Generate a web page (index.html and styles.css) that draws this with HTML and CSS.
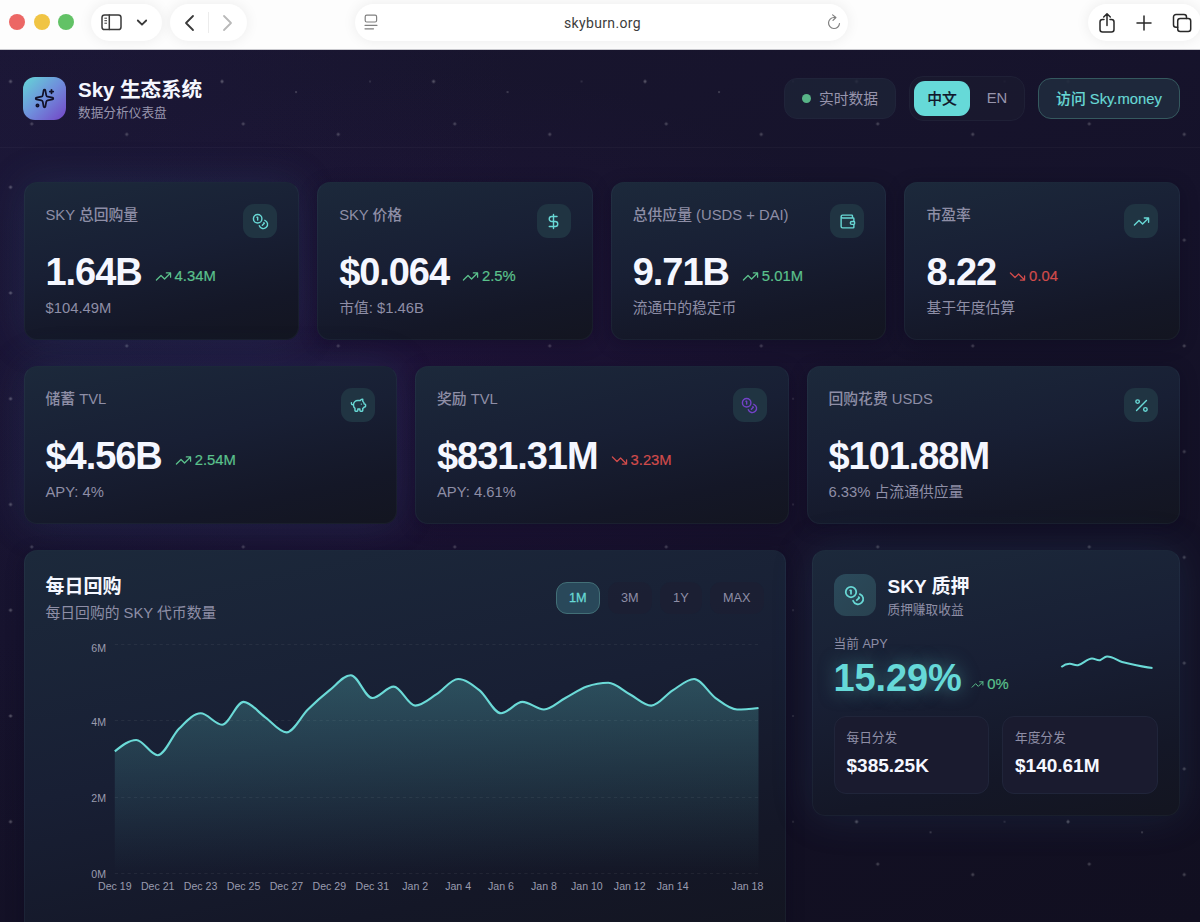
FILE: index.html
```html
<!DOCTYPE html>
<html lang="zh-CN">
<head>
<meta charset="utf-8">
<title>Sky 生态系统</title>
<link rel="stylesheet" href="styles.css">
</head>
<body>
<svg class="sprite" aria-hidden="true">
  <symbol id="coins" viewBox="0 0 24 24"><circle cx="8" cy="8" r="6"/><path d="M18.09 10.37A6 6 0 1 1 10.34 18M7 6h1v4M16.71 13.88l.7.71-2.82 2.82"/></symbol>
  <symbol id="dollar" viewBox="0 0 24 24"><path d="M12 2v20M17 5H9.5a3.5 3.5 0 0 0 0 7h5a3.5 3.5 0 0 1 0 7H6"/></symbol>
  <symbol id="wallet" viewBox="0 0 24 24"><path d="M19 7V4a1 1 0 0 0-1-1H5a2 2 0 0 0 0 4h15a1 1 0 0 1 1 1v4h-3a2 2 0 0 0 0 4h3a1 1 0 0 0 1-1v-2a1 1 0 0 0-1-1M3 5v14a2 2 0 0 0 2 2h15a1 1 0 0 0 1-1v-4"/></symbol>
  <symbol id="up" viewBox="0 0 24 24"><path d="M22 7l-8.500 8.500-5-5L2 17M16 7h6v6"/></symbol>
  <symbol id="down" viewBox="0 0 24 24"><path d="M22 17l-8.500-8.500-5 5L2 7M16 17h6v-6"/></symbol>
  <symbol id="piggy" viewBox="0 0 24 24"><path d="M11 17h3v2a1 1 0 0 0 1 1h2a1 1 0 0 0 1-1v-3a3.160 3.160 0 0 0 2-2h1a1 1 0 0 0 1-1v-2a1 1 0 0 0-1-1h-1a5 5 0 0 0-2-4V3a4 4 0 0 0-3.200 1.600l-.3.4H11a6 6 0 0 0-6 6v1a5 5 0 0 0 2 4v3a1 1 0 0 0 1 1h2a1 1 0 0 0 1-1zM16 10h.01M2 8v1a2 2 0 0 0 2 2h1"/></symbol>
  <symbol id="percent" viewBox="0 0 24 24"><path d="M19 5L5 19"/><circle cx="6.5" cy="6.5" r="2.500"/><circle cx="17.5" cy="17.5" r="2.500"/></symbol>
  <symbol id="sparkles" viewBox="0 0 24 24"><path d="M11.017 2.814a1 1 0 0 1 1.966 0l1.051 5.558a2 2 0 0 0 1.594 1.594l5.558 1.051a1 1 0 0 1 0 1.966l-5.558 1.051a2 2 0 0 0-1.594 1.594l-1.051 5.558a1 1 0 0 1-1.966 0l-1.051-5.558a2 2 0 0 0-1.594-1.594l-5.558-1.051a1 1 0 0 1 0-1.966l5.558-1.051a2 2 0 0 0 1.594-1.594zM20 2v4M22 4h-4"/><circle cx="4" cy="20" r="1.300"/></symbol>
</svg>

<div class="browser">
  <div class="lights"><i class="red"></i><i class="yellow"></i><i class="green"></i></div>
  <div class="pill pill-side">
    <svg width="22" height="17" viewBox="0 0 22 17"><rect x="1" y="1" width="19" height="14.500" rx="2.600"/><path d="M8.300 1v14.500"/><path class="thin" d="M3.800 4.200h1.800M3.800 6.700h1.800M3.800 9.200h1.800"/></svg>
    <svg width="12" height="8" viewBox="0 0 12 8"><path class="bold" d="M1.800 1.500L6 5.700l4.200-4.200"/></svg>
  </div>
  <div class="pill pill-nav">
    <svg width="11" height="18" viewBox="0 0 11 18"><path class="bold" d="M9 2L2 9l7 7"/></svg>
    <span class="nav-line"></span>
    <svg class="off" width="11" height="18" viewBox="0 0 11 18"><path class="bold" d="M2 2l7 7-7 7"/></svg>
  </div>
  <div class="pill pill-url">
    <svg class="grey" width="14" height="17" viewBox="0 0 14 17"><rect x="1.200" y="1.200" width="11.400" height="6.800" rx="1.500"/><path d="M1 11.300h12M1 14.800h8.500"/></svg>
    <span class="url">skyburn.org</span>
    <svg class="grey" width="14" height="17" viewBox="0 0 14 17"><path d="M8.300 3.500H7A5.500 5.500 0 1 0 12.500 9.500M5.600.9l3.300 2.600-2.900 2.900"/></svg>
  </div>
  <div class="pill pill-tools">
    <svg width="18" height="22" viewBox="0 0 18 22"><path d="M6 7.500H4.500A2.500 2.500 0 0 0 2 10v7.500A2.500 2.500 0 0 0 4.500 20h9a2.500 2.500 0 0 0 2.500-2.500V10a2.500 2.500 0 0 0-2.500-2.500H12M9 13.500V2M5.700 5L9 1.800 12.300 5"/></svg>
    <svg width="16" height="16" viewBox="0 0 16 16"><path d="M8 1v14M1 8h14"/></svg>
    <svg width="20" height="20" viewBox="0 0 20 20"><path d="M5.700 14.200H4A2.500 2.500 0 0 1 1.500 11.700V4A2.500 2.500 0 0 1 4 1.500h8A2.500 2.500 0 0 1 14.500 4v1.500"/><rect x="5.700" y="5.500" width="13" height="13" rx="2.500"/></svg>
  </div>
</div>

<div class="page">
  <header class="header">
    <div class="logo"><svg class="icon"><use href="#sparkles"/></svg></div>
    <div class="brand"><h1>Sky 生态系统</h1><p>数据分析仪表盘</p></div>
    <div class="live"><i></i><span>实时数据</span></div>
    <div class="lang"><span class="active">中文</span><span>EN</span></div>
    <a class="visit">访问 Sky.money</a>
  </header>

  <main class="main">
    <section class="row four">
      <article class="card glow">
        <div class="top"><span>SKY 总回购量</span><b class="chip"><svg class="icon"><use href="#coins"/></svg></b></div>
        <div class="figure"><strong>1.64B</strong><em class="trend"><svg class="icon"><use href="#up"/></svg>4.34M</em></div>
        <p>$104.49M</p>
      </article>
      <article class="card">
        <div class="top"><span>SKY 价格</span><b class="chip"><svg class="icon"><use href="#dollar"/></svg></b></div>
        <div class="figure"><strong>$0.064</strong><em class="trend"><svg class="icon"><use href="#up"/></svg>2.5%</em></div>
        <p>市值: $1.46B</p>
      </article>
      <article class="card">
        <div class="top"><span>总供应量 (USDS + DAI)</span><b class="chip"><svg class="icon"><use href="#wallet"/></svg></b></div>
        <div class="figure"><strong>9.71B</strong><em class="trend"><svg class="icon"><use href="#up"/></svg>5.01M</em></div>
        <p>流通中的稳定币</p>
      </article>
      <article class="card">
        <div class="top"><span>市盈率</span><b class="chip"><svg class="icon"><use href="#up"/></svg></b></div>
        <div class="figure"><strong>8.22</strong><em class="trend down"><svg class="icon"><use href="#down"/></svg>0.04</em></div>
        <p>基于年度估算</p>
      </article>
    </section>

    <section class="row three">
      <article class="card glow">
        <div class="top"><span>储蓄 TVL</span><b class="chip"><svg class="icon"><use href="#piggy"/></svg></b></div>
        <div class="figure"><strong>$4.56B</strong><em class="trend"><svg class="icon"><use href="#up"/></svg>2.54M</em></div>
        <p>APY: 4%</p>
      </article>
      <article class="card">
        <div class="top"><span>奖励 TVL</span><b class="chip purple"><svg class="icon"><use href="#coins"/></svg></b></div>
        <div class="figure"><strong>$831.31M</strong><em class="trend down"><svg class="icon"><use href="#down"/></svg>3.23M</em></div>
        <p>APY: 4.61%</p>
      </article>
      <article class="card">
        <div class="top"><span>回购花费 USDS</span><b class="chip"><svg class="icon"><use href="#percent"/></svg></b></div>
        <div class="figure"><strong>$101.88M</strong></div>
        <p>6.33% 占流通供应量</p>
      </article>
    </section>

    <section class="bottom">
      <article class="card chart-card">
        <div class="chart-head">
          <div><h2>每日回购</h2><p>每日回购的 SKY 代币数量</p></div>
          <div class="ranges"><span class="active">1M</span><span>3M</span><span>1Y</span><span>MAX</span></div>
        </div>
        <svg class="chart" id="chart" width="720" height="262" viewBox="45.500 636 720 262">
          <defs><linearGradient id="fade" x1="0" y1="675" x2="0" y2="873" gradientUnits="userSpaceOnUse"><stop offset="0" stop-color="#66d9d4" stop-opacity=".26"/><stop offset="1" stop-color="#66d9d4" stop-opacity="0"/></linearGradient></defs>
        </svg>
      </article>

      <article class="card stake glow">
        <div class="stake-head">
          <b class="stake-icon"><svg class="icon"><use href="#coins"/></svg></b>
          <div><h2>SKY 质押</h2><p>质押赚取收益</p></div>
        </div>
        <div class="apy">
          <div>
            <p>当前 APY</p>
            <div class="apy-figure"><strong>15.29%</strong><em class="trend small"><svg class="icon"><use href="#up"/></svg>0%</em></div>
          </div>
          <svg class="spark" width="96" height="20" viewBox="1059 652 96 20"><path d="M1061.300 667C1064 665 1067 663.600 1070 663.800C1073 664.100 1075 665.700 1078 665.200C1083 664.200 1087 658.500 1092 658.500C1095 658.500 1097 660.800 1100 660.200C1103 659.400 1104 656.600 1107 656.500C1113 656.300 1117 660.800 1122 662C1132 664.300 1142 667 1152.500 668"/></svg>
        </div>
        <div class="payouts">
          <div><p>每日分发</p><strong>$385.25K</strong></div>
          <div><p>年度分发</p><strong>$140.61M</strong></div>
        </div>
      </article>
    </section>
  </main>
</div>
<script src="chart.js"></script>
</body>
</html>
```
FILE: styles.css
```css
* { box-sizing: border-box; }
body, h1, h2, p { margin: 0; }
body {
  width: 1200px; height: 922px; overflow: hidden; color: #f5f7ff; background: #15112a;
  font-family: "Liberation Sans", "Noto Sans CJK SC", sans-serif; font-size: 14.8px;
}
em, i { font-style: normal; }
.sprite { position: absolute; width: 0; height: 0; }
.icon { width: 17px; height: 17px; fill: none; stroke: currentColor; stroke-width: 2; stroke-linecap: round; stroke-linejoin: round; display: block; }

/* browser toolbar */
.browser { height: 50px; background: #fdfdfd; border-bottom: 1px solid #c9c9ce; display: flex; padding-top: 4px; overflow: hidden; }
.browser svg { fill: none; stroke: #3a3a3a; stroke-width: 1.5; stroke-linecap: round; stroke-linejoin: round; flex: none; }
.browser .thin { stroke-width: 1; }
.browser .bold { stroke-width: 1.8; }
.browser .off { stroke: #b9b9b9; }
.browser .grey { stroke: #808080; stroke-width: 1.2; }
.lights { display: flex; gap: 8.500px; padding: 10px 0 0 9px; width: 91px; flex: none; }
.lights i { width: 16px; height: 16px; border-radius: 50%; }
.red { background: #ec6765; } .yellow { background: #f0c444; } .green { background: #62c266; }
.pill { height: 37px; border-radius: 19px; background: #fff; box-shadow: 0 0 14px rgba(0,0,0,.075); display: flex; align-items: center; flex: none; }
.pill-side { width: 71px; padding-left: 10px; gap: 13px; margin-right: 8px; }
.pill-nav { width: 77px; padding-left: 14px; gap: 13px; margin-right: 108px; }
.nav-line { width: 1px; height: 21px; background: #ececec; }
.pill-url { width: 493px; padding: 0 7px 0 9px; justify-content: space-between; margin-right: 240px; }
.url { font: 14px/20px Roboto, sans-serif; letter-spacing: .35px; color: #3c3c3c; }
.pill-tools { width: 113px; padding-left: 10px; gap: 20px; }
.pill-tools svg { stroke: #292929; }

/* page and star field */
.page {
  height: 872px;
  background-image:
    radial-gradient(circle, rgba(255,255,255,.25) 0 1px, transparent 2px),
    radial-gradient(circle, rgba(255,255,255,.19) 0 1px, transparent 2px),
    radial-gradient(circle, rgba(255,255,255,.2) 0 1px, transparent 2px),
    radial-gradient(circle, rgba(255,255,255,.2) 0 .5px, transparent 1.500px),
    radial-gradient(circle, rgba(255,255,255,.13) 0 .5px, transparent 1.500px),
    radial-gradient(ellipse 520px 330px at 430px 350px, rgba(62,18,105,.22), transparent),
    radial-gradient(ellipse 520px 700px at 0 150px, rgba(38,28,84,.25), transparent),
    linear-gradient(160deg, #19162f 0%, #15122a 45%, #110f20 100%);
  background-size: 211.500px 105.750px, 211.500px 105.750px, 211.500px 105.750px, 211.500px 105.750px, 211.500px 105.750px, auto, auto, auto;
  background-position: -95.200px -21.400px, -74px 21px, 21px 31.500px, -21.200px -10.800px, 52.800px -21.400px, 0 0, 0 0, 0 0;
}
.header { height: 98px; padding: 0 20px 1px 23px; display: flex; align-items: center; border-bottom: 1px solid rgba(255,255,255,.03); }
.logo { width: 43px; height: 43px; border-radius: 12px; background: linear-gradient(135deg, #64d7d6 0%, #6f8fdc 50%, #7444c6 100%); color: #12122a; display: grid; place-items: center; }
.logo .icon { width: 21px; height: 21px; }
.brand { margin-left: 12px; flex: 1; padding-top: 2px; }
.brand h1 { font-size: 20.600px; line-height: 27px; letter-spacing: -.1px; }
.brand p { font-size: 12.700px; line-height: 20px; color: #9794ac; }
.live { width: 112px; height: 41px; border: 1px solid #20243a; border-radius: 13px; background: rgba(29,35,55,.8); color: #9794ac; display: flex; align-items: center; justify-content: center; gap: 8px; }
.live span { padding-bottom: 2px; }
.live i { width: 9px; height: 9px; border-radius: 50%; background: #58b487; }
.lang { width: 116px; height: 45px; margin: 0 13px; padding: 4px; border: 1px solid #1f2036; border-radius: 14px; background: rgba(26,26,48,.8); color: #9794ac; display: flex; }
.lang span { width: 54px; line-height: 35px; text-align: center; border-radius: 11px; flex: none; }
.lang .active { width: 56px; background: #66d9d8; color: #11162a; font-weight: 500; -webkit-text-stroke: .15px #11162a; line-height: 36px; height: 35px; }
.visit { width: 142px; height: 41px; border: 1px solid #35595f; border-radius: 13px; background: rgba(31,42,61,.92); color: #68d8d5; line-height: 40px; text-align: center; font-weight: 500; -webkit-text-stroke: .15px #68d8d5; }

/* metric cards */
.main { padding: 34px 20px 0 23.500px; display: flex; flex-direction: column; gap: 26px; }
.row { display: grid; gap: 18px; }
.four { grid-template-columns: repeat(4, 1fr); }
.three { grid-template-columns: repeat(3, 1fr); }
.card {
  height: 158px; padding: 21px; border: 1px solid rgba(110,150,180,.07); border-top-color: rgba(110,150,180,.02); border-radius: 13px;
  background: linear-gradient(168deg, #1c293b 0%, #181f34 45%, #141727 78%, #131520 100%) border-box;
  box-shadow: 0 4px 18px rgba(10,8,26,.3);
}
.glow { box-shadow: 0 0 42px rgba(62,120,165,.17); }
.card p { color: #8e8ea6; }
.top { display: flex; justify-content: space-between; height: 34px; line-height: 22px; color: #8e8ea6; font-weight: 500; }
.chip { width: 34px; height: 34px; border-radius: 11px; background: #203442; color: #68d8d5; display: grid; place-items: center; }
.chip.purple { color: #7342c8; }
.figure { display: flex; height: 38px; margin-top: 14px; gap: 13px; align-items: center; }
.figure strong { font-size: 38px; line-height: 38px; letter-spacing: -1.060px; padding-top: 1px; }
.trend { display: flex; align-items: center; gap: 3px; color: #5bc18c; margin-top: 10px; line-height: 18px; -webkit-text-stroke: .2px; }
.trend.down { color: #d14b4b; }
.trend .icon { stroke-width: 1.8; }
.card > p { margin-top: 8px; line-height: 20px; }

/* chart and staking */
.bottom { display: grid; grid-template-columns: 762px 368px; gap: 26px; align-items: start; }
.chart-card { height: 400px; }
.card h2 { font-size: 19px; line-height: 28px; }
.chart-head { display: flex; justify-content: space-between; height: 64px; }
.chart-head > div:first-child { padding-top: 1px; }
.chart-head p { line-height: 24px; }
.ranges { display: flex; gap: 7.400px; margin: 9.500px -.5px 0 0; font-size: 12.700px; color: #8e8ea6; }
.ranges span { height: 32px; padding: 0 12.500px; line-height: 30px; border: 1px solid transparent; border-radius: 11px; background: rgba(29,30,50,.6); }
.ranges .active { background: #29485a; border-color: #426f77; color: #68d8d5; -webkit-text-stroke: .3px; }
.chart { display: block; font-size: 10.600px; fill: #9a9caf; }
.chart .grid { stroke: #fff; stroke-opacity: .06; stroke-dasharray: 3.200 3.200; }
.chart .line { fill: none; stroke: #6bdad7; stroke-width: 2.100; }
.stake { height: 266px; }
.stake-head { display: flex; gap: 12px; height: 60px; padding-top: 1px; }
.stake-head p { font-size: 12.700px; line-height: 18px; }
.stake-icon { width: 42px; height: 42px; margin-top: 1px; border-radius: 12px; background: linear-gradient(135deg, #2b4a5b, #294250); color: #68d8d5; display: grid; place-items: center; }
.stake-icon .icon { width: 21px; height: 21px; }
.apy { display: flex; justify-content: space-between; height: 84px; font-size: 12.700px; }
.apy p { line-height: 24px; }
.apy-figure { display: flex; align-items: center; gap: 9.500px; height: 42px; font-size: 14.800px; }
.apy-figure strong { font-size: 38px; line-height: 42px; letter-spacing: -.1px; padding-top: 2px; color: #66d9d8; text-shadow: 0 0 18px rgba(102,217,216,.5); }
.trend.small { margin-top: 14px; }
.trend.small .icon { width: 13px; height: 13px; }
.spark { margin: 20px 3px 0 0; fill: none; stroke: #6bdad7; stroke-width: 2; }
.payouts { display: grid; grid-template-columns: 1fr 1fr; gap: 13px; }
.payouts > div { height: 78px; padding: 9px 12px; border: 1px solid #20253a; border-radius: 12px; background: #1a1b2f; }
.payouts p { font-size: 12.700px; line-height: 24px; }
.payouts strong { display: block; font-size: 19px; line-height: 30px; margin-top: 1px; }
```
FILE: chart.js
```js
const values = [3.2, 3.5, 3.1, 3.8, 4.2, 3.9, 4.5, 4.1, 3.7, 4.3, 4.8, 5.2, 4.6, 4.9, 4.4, 4.7,
  5.1, 4.8, 4.2, 4.5, 4.3, 4.6, 4.9, 5.0, 4.7, 4.4, 4.8, 5.1, 4.6, 4.3, 4.34];
const left = 114.3, right = 758, base = 873.3, unit = 38.1;
const step = (right - left) / (values.length - 1);
const pts = values.map((v, i) => [left + i * step, base - v * unit]);

// Monotone cubic interpolation through the points
const n = pts.length;
const slope = (i) => (pts[i + 1][1] - pts[i][1]) / step;
const tangents = pts.map((_, i) => {
  if (i === 0 || i === n - 1) return 0;
  const a = slope(i - 1), b = slope(i);
  return (Math.sign(a) + Math.sign(b)) * Math.min(Math.abs(a), Math.abs(b), Math.abs(a + b) / 4);
});
tangents[0] = (3 * slope(0) - tangents[1]) / 2;
tangents[n - 1] = (3 * slope(n - 2) - tangents[n - 2]) / 2;
let line = `M${pts[0]}`;
for (let i = 1; i < n; i++) {
  const [x0, y0] = pts[i - 1], [x1, y1] = pts[i], h = step / 3;
  line += `C${x0 + h},${y0 + h * tangents[i - 1]},${x1 - h},${y1 - h * tangents[i]},${x1},${y1}`;
}

let out = '';
[[0, 877.5], [2, 801.5], [4, 725.5], [6, 652]].forEach(([v, y]) => {
  const gy = Math.floor(base - v * unit) + 0.5;
  out += `<path class="grid" d="M${left} ${gy}H${right}"/><text x="105.500" y="${y}" text-anchor="end">${v}M</text>`;
});
out += `<path fill="url(#fade)" d="${line}V${base}H${left}Z"/><path class="line" d="${line}"/>`;
const days = ['Dec 19', 'Dec 21', 'Dec 23', 'Dec 25', 'Dec 27', 'Dec 29', 'Dec 31', 'Jan 2', 'Jan 4',
  'Jan 6', 'Jan 8', 'Jan 10', 'Jan 12', 'Jan 14'];
days.forEach((d, i) => { out += `<text x="${left + i * 2 * step}" y="890" text-anchor="middle">${d}</text>`; });
out += '<text x="747" y="890" text-anchor="middle">Jan 18</text>';
document.getElementById('chart').insertAdjacentHTML('beforeend', out);
```
